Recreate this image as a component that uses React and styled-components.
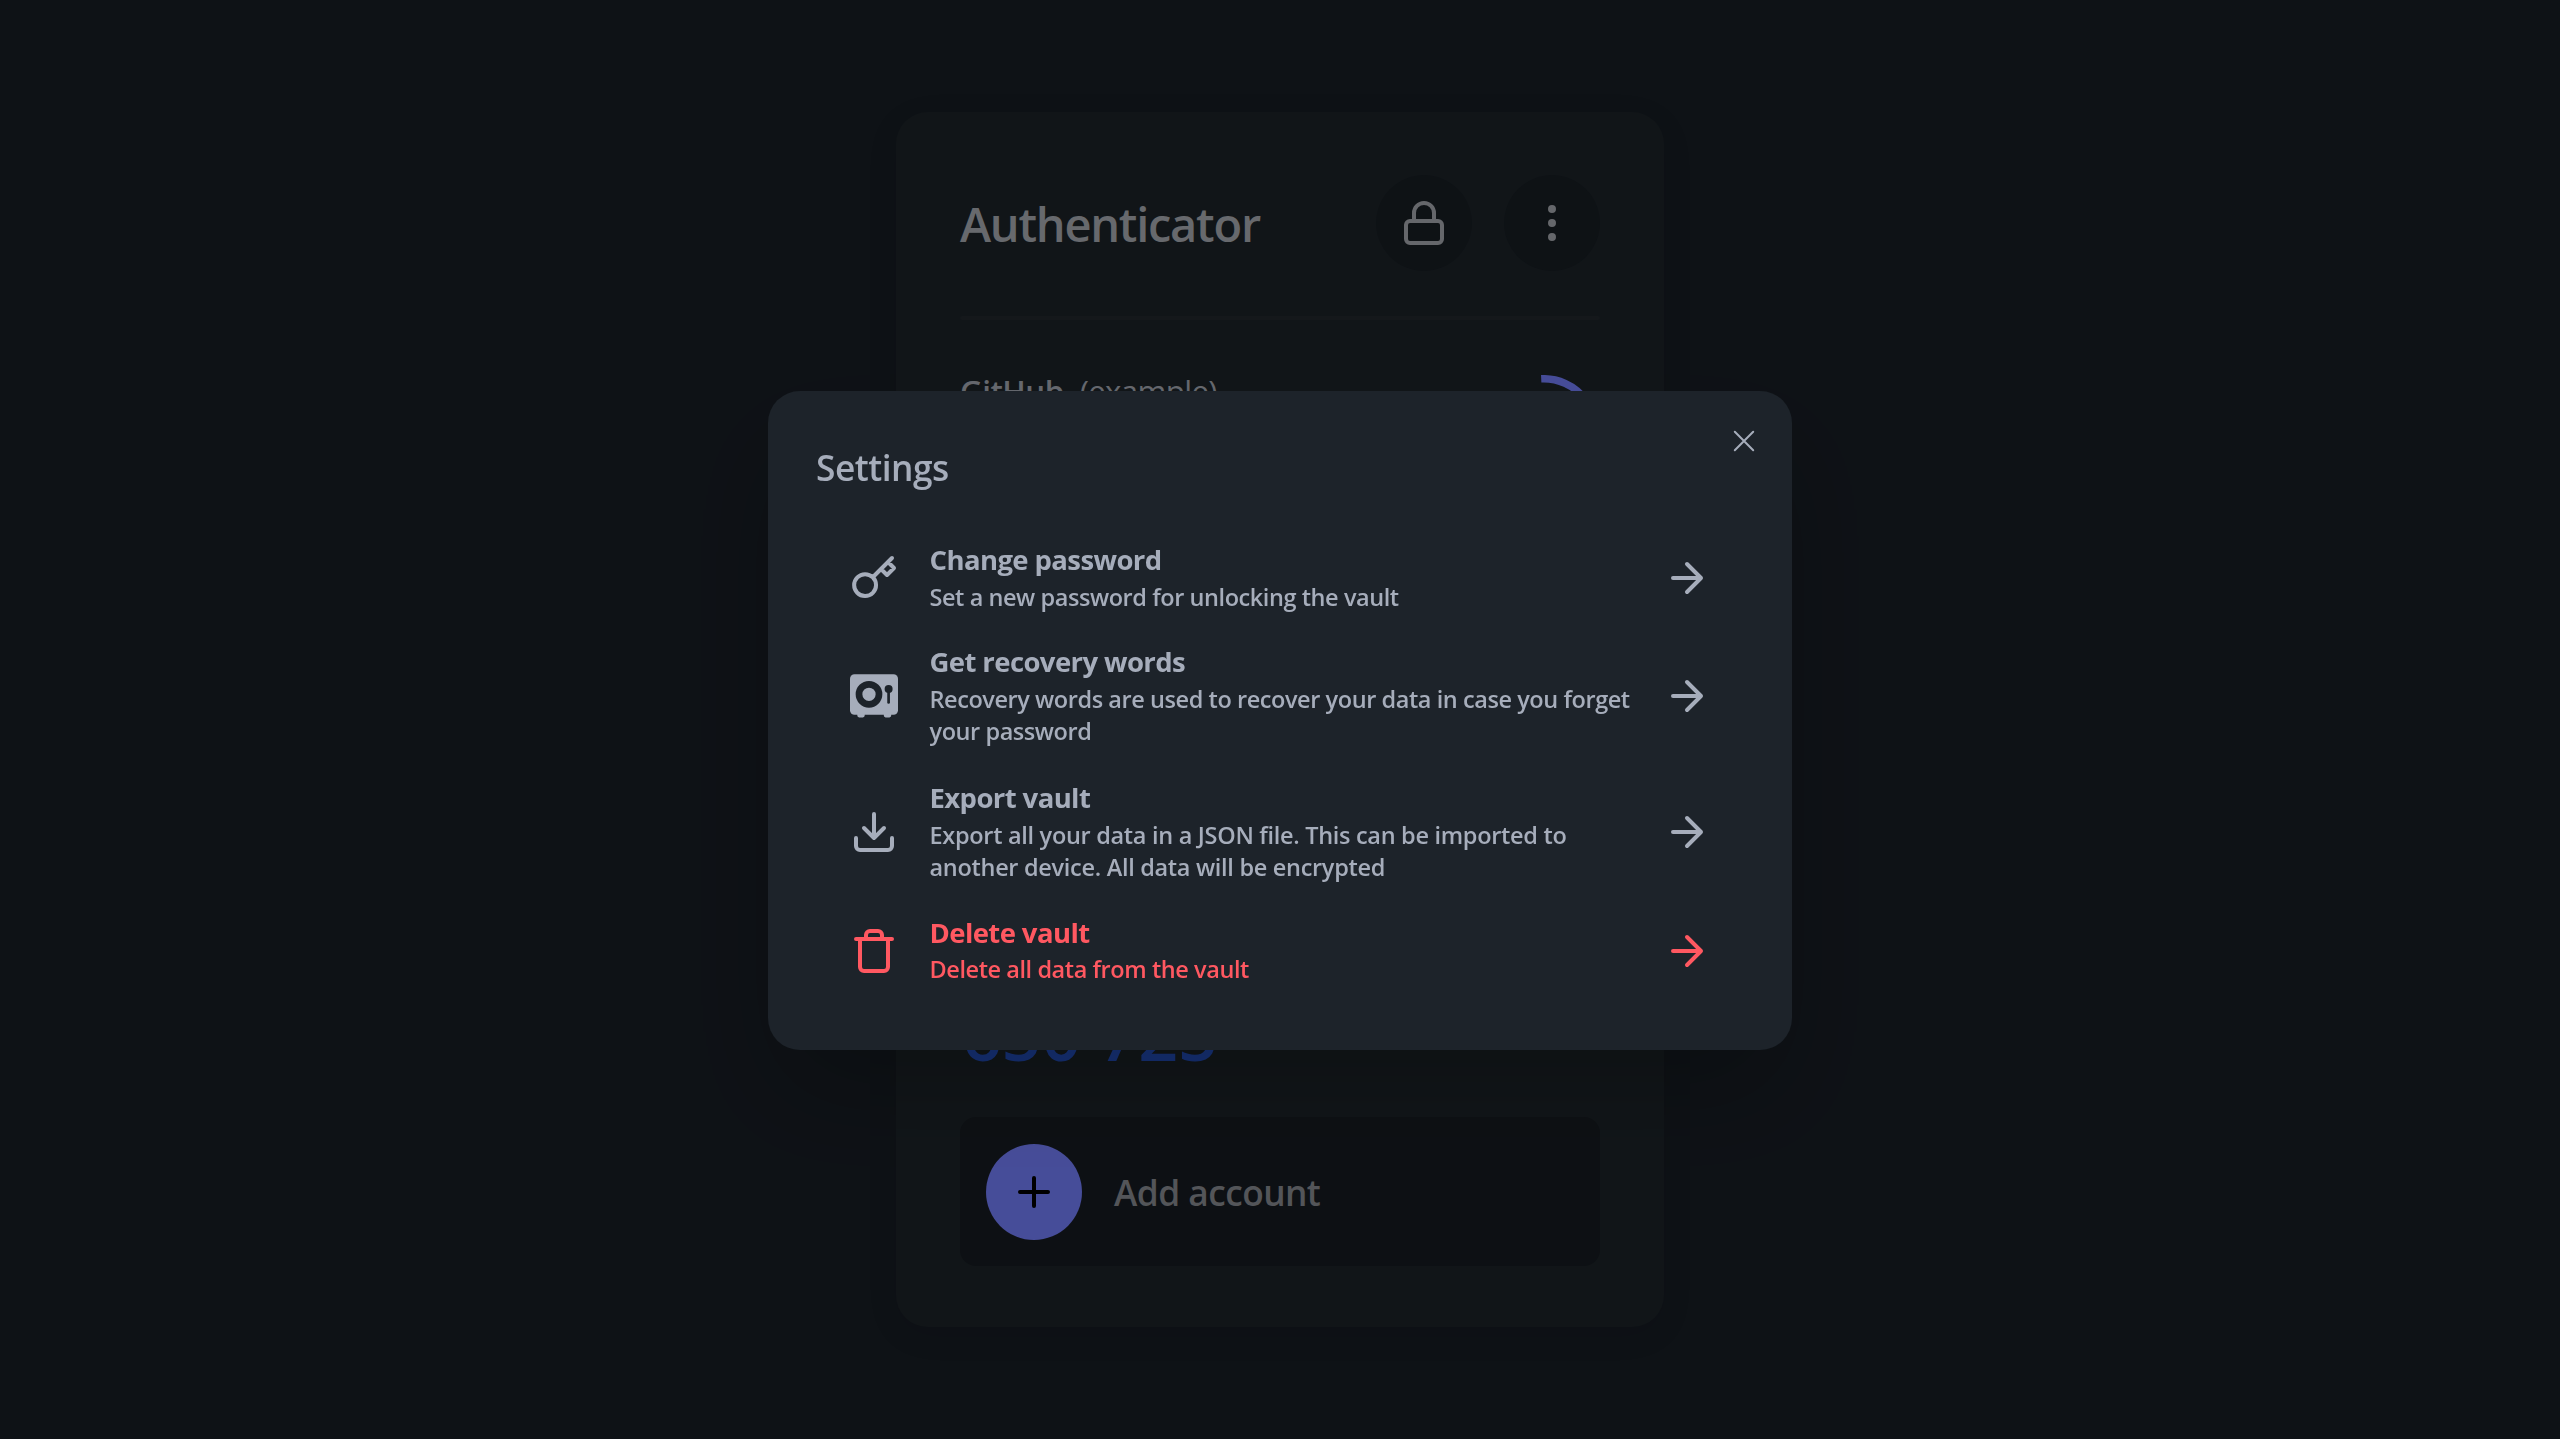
import React from "react";
import styled, { createGlobalStyle } from "styled-components";

const GlobalStyle = createGlobalStyle`
  * { box-sizing: border-box; }
  body {
    margin: 0;
    background: #181e25;
    color: #a9aeb8;
    font-family: "Open Sans", "Noto Sans", sans-serif;
    overflow: hidden;
  }
  button { font: inherit; color: inherit; border: 0; background: none; padding: 0; }
  h1, h2, h3, p { margin: 0; }
`;

const Page = styled.main`
  min-height: 100vh;
  display: flex;
  justify-content: center;
  align-items: center;
`;

const Card = styled.section`
  width: 768px;
  height: 1215px;
  padding: 63px 64px 61px;
  border-radius: 32px;
  background: #1d2429;
  box-shadow: 0 8px 32px rgba(0, 0, 0, 0.08);
  display: flex;
  flex-direction: column;
`;

const CardHeader = styled.header`
  display: flex;
  align-items: center;
  gap: 32px;
  height: 96px;
`;

const CardTitle = styled.h1`
  flex: 1;
  padding-top: 2px;
  font-size: 47px;
  line-height: 64px;
  font-weight: 600;
  letter-spacing: -1.25px;
  color: #acafb6;
`;

const RoundButton = styled.button`
  width: 96px;
  height: 96px;
  border-radius: 50%;
  display: grid;
  place-items: center;
  flex: none;
  background: ${(p) => (p.$primary ? "#7680ff" : "#181e24")};
  color: ${(p) => (p.$primary ? "#000" : "#a9acb2")};
`;

const Divider = styled.hr`
  width: 100%;
  height: 4px;
  margin: 45px 0 50px;
  border: 0;
  border-radius: 2px;
  background: #23292d;
`;

const Account = styled.article`
  flex: 1;
  display: flex;
  flex-direction: column;
  justify-content: space-between;
  margin-bottom: 43px;
`;

const AccountHeader = styled.div`
  display: flex;
  justify-content: space-between;
`;

const AccountName = styled.h3`
  display: flex;
  gap: 16px;
  padding-top: 1px;
  font-size: 31.3px;
  line-height: 40px;
  font-weight: 600;
  letter-spacing: -0.5px;
`;

const AccountLabel = styled.span`
  font-weight: 400;
  letter-spacing: -0.7px;
`;

const TimerRing = styled.svg`
  width: 112px;
  height: 112px;
  margin-top: 5px;
`;

const Code = styled.p`
  font-size: 70px;
  line-height: 80px;
  font-weight: 600;
  letter-spacing: -0.4px;
  padding-left: 2px;
  color: #2452c4;
`;

const AddAccount = styled.button`
  height: 149px;
  padding: 0 26px;
  border-radius: 16px;
  background: #171c22;
  display: flex;
  align-items: center;
  gap: 32px;
`;

const AddLabel = styled.span`
  padding-top: 1px;
  font-size: 35.3px;
  line-height: 56px;
  font-weight: 600;
  letter-spacing: -0.55px;
  color: #8b8e94;
`;

const Backdrop = styled.div`
  position: fixed;
  inset: 0;
  display: flex;
  align-items: center;
  justify-content: center;
  padding-top: 2px;
  background: rgba(0, 0, 0, 0.4);
`;

const Modal = styled.div`
  position: relative;
  width: 1024px;
  padding: 48px 48px 49.6px;
  border-radius: 32px;
  background: #1d232a;
  color: #a6adbb;
  box-shadow: 0 50px 100px -24px rgba(0, 0, 0, 0.25);
`;

const ModalTitle = styled.h2`
  font-size: 35.3px;
  line-height: 56px;
  font-weight: 600;
  letter-spacing: -0.5px;
  margin-bottom: 33px;
`;

const CloseButton = styled.button`
  position: absolute;
  top: 18px;
  right: 16px;
  width: 64px;
  height: 64px;
  display: grid;
  place-items: center;
`;

const Option = styled.button`
  width: 100%;
  height: ${(p) => (p.$tall ? "136px" : "100.6px")};
  padding: 0 33.5px;
  display: flex;
  align-items: center;
  text-align: left;
  color: ${(p) => (p.$danger ? "#ff5861" : "inherit")};
`;

const OptionText = styled.div`
  flex: 1;
  margin: 1.5px 18px 0 32px;
`;

const OptionTitle = styled.h3`
  font-size: 27.5px;
  line-height: 31px;
  font-weight: 700;
  letter-spacing: -0.6px;
  margin-bottom: 5.5px;
`;

const OptionNote = styled.p`
  font-size: 23.5px;
  line-height: 32.5px;
  font-weight: 600;
  letter-spacing: ${(p) => p.$tracking || "-0.43px"};
`;

const StrokeIcon = styled.svg.attrs({ viewBox: "0 0 24 24" })`
  width: 48px;
  height: 48px;
  flex: none;
  fill: none;
  stroke: currentColor;
  stroke-width: 2;
  stroke-linecap: round;
  stroke-linejoin: round;
`;

const SolidIcon = styled.svg.attrs({ viewBox: "0 0 48 48" })`
  width: 48px;
  height: 48px;
  flex: none;
  fill: currentColor;
`;

const LockIcon = () => (
  <StrokeIcon>
    <rect x="3" y="11" width="18" height="11" rx="2" />
    <path d="M7 11V7a5 5 0 0 1 10 0v4" />
  </StrokeIcon>
);
const DotsIcon = () => (
  <StrokeIcon>
    <circle cx="12" cy="5" r="1" />
    <circle cx="12" cy="12" r="1" />
    <circle cx="12" cy="19" r="1" />
  </StrokeIcon>
);
const PlusIcon = () => (
  <StrokeIcon>
    <path d="M12 5v14M5 12h14" />
  </StrokeIcon>
);
const ArrowIcon = () => (
  <StrokeIcon>
    <path d="M5 12h14M12 5l7 7-7 7" />
  </StrokeIcon>
);
const KeyIcon = () => (
  <StrokeIcon>
    <path d="M21 2l-2 2m-7.61 7.61a5.5 5.5 0 1 1-7.778 7.778 5.5 5.5 0 0 1 7.777-7.777zm0 0L15.5 7.5m0 0l3 3L22 7l-3-3m-3.5 3.5L19 4" />
  </StrokeIcon>
);
const DownloadIcon = () => (
  <StrokeIcon>
    <path d="M21 15v4a2 2 0 0 1-2 2H5a2 2 0 0 1-2-2v-4M7 10l5 5 5-5M12 15V3" />
  </StrokeIcon>
);
const TrashIcon = () => (
  <StrokeIcon>
    <path d="M3 6h18M19 6v14a2 2 0 0 1-2 2H7a2 2 0 0 1-2-2V6m3 0V4a2 2 0 0 1 2-2h4a2 2 0 0 1 2 2v2" />
  </StrokeIcon>
);
const SafeIcon = () => (
  <SolidIcon>
    <rect x="0" y="2.3" width="48" height="40.4" rx="4.5" />
    <path d="M7.3 42h7.4v1.6a1.8 1.8 0 0 1-1.8 1.8H9.1a1.8 1.8 0 0 1-1.8-1.8zM33.8 42h7.4v1.6a1.8 1.8 0 0 1-1.8 1.8h-3.8a1.8 1.8 0 0 1-1.8-1.8z" />
    <circle cx="19" cy="22.3" r="10" fill="none" stroke="#1d232a" strokeWidth="6.7" />
    <circle cx="38.6" cy="17" r="4" fill="#1d232a" />
    <path d="M38.6 18v12.4" stroke="#1d232a" strokeWidth="2.7" strokeLinecap="round" />
  </SolidIcon>
);

const OPTIONS = [
  { icon: KeyIcon, title: "Change password", note: "Set a new password for unlocking the vault" },
  {
    icon: SafeIcon,
    title: "Get recovery words",
    note: "Recovery words are used to recover your data in case you forget your password",
    tall: true,
  },
  {
    icon: DownloadIcon,
    title: "Export vault",
    note: "Export all your data in a JSON file. This can be imported to another device. All data will be encrypted",
    tall: true,
    tracking: "-0.3px",
  },
  { icon: TrashIcon, title: "Delete vault", note: "Delete all data from the vault", danger: true },
];

export default function App() {
  return (
    <>
      <GlobalStyle />
      <Page>
        <Card>
          <CardHeader>
            <CardTitle>Authenticator</CardTitle>
            <RoundButton aria-label="Lock"><LockIcon /></RoundButton>
            <RoundButton aria-label="Menu"><DotsIcon /></RoundButton>
          </CardHeader>
          <Divider />
          <Account>
            <AccountHeader>
              <AccountName>
                GitHub <AccountLabel>(example)</AccountLabel>
              </AccountName>
              <TimerRing viewBox="0 0 112 112">
                <path d="M53.2 3.75A52.3 52.3 0 0 1 104 76" fill="none" stroke="#7680ff" strokeWidth="7.4" />
              </TimerRing>
            </AccountHeader>
            <Code>650 725</Code>
          </Account>
          <AddAccount>
            <RoundButton as="span" $primary><PlusIcon /></RoundButton>
            <AddLabel>Add account</AddLabel>
          </AddAccount>
        </Card>
      </Page>
      <Backdrop>
        <Modal role="dialog">
          <CloseButton aria-label="Close">
            <svg width="22" height="22" viewBox="0 0 22 22" fill="none" stroke="currentColor" strokeWidth="2" strokeLinecap="round">
              <path d="M1.8 1.8l18.4 18.4M20.2 1.8L1.8 20.2" />
            </svg>
          </CloseButton>
          <ModalTitle>Settings</ModalTitle>
          {OPTIONS.map(({ icon: Icon, title, note, tall, danger, tracking }) => (
            <Option key={title} $tall={tall} $danger={danger}>
              <Icon />
              <OptionText>
                <OptionTitle>{title}</OptionTitle>
                <OptionNote $tracking={tracking}>{note}</OptionNote>
              </OptionText>
              <ArrowIcon />
            </Option>
          ))}
        </Modal>
      </Backdrop>
    </>
  );
}
